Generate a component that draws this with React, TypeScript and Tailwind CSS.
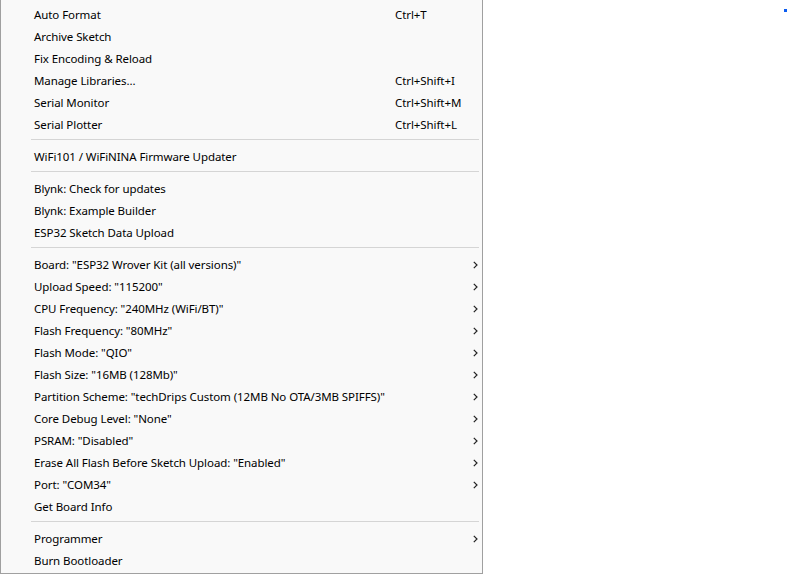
type Item = { label: string; shortcut?: string; sub?: boolean } | "sep";

const items: Item[] = [
  { label: "Auto Format", shortcut: "Ctrl+T" },
  { label: "Archive Sketch" },
  { label: "Fix Encoding & Reload" },
  { label: "Manage Libraries...", shortcut: "Ctrl+Shift+I" },
  { label: "Serial Monitor", shortcut: "Ctrl+Shift+M" },
  { label: "Serial Plotter", shortcut: "Ctrl+Shift+L" },
  "sep",
  { label: "WiFi101 / WiFiNINA Firmware Updater" },
  "sep",
  { label: "Blynk: Check for updates" },
  { label: "Blynk: Example Builder" },
  { label: "ESP32 Sketch Data Upload" },
  "sep",
  { label: 'Board: "ESP32 Wrover Kit (all versions)"', sub: true },
  { label: 'Upload Speed: "115200"', sub: true },
  { label: 'CPU Frequency: "240MHz (WiFi/BT)"', sub: true },
  { label: 'Flash Frequency: "80MHz"', sub: true },
  { label: 'Flash Mode: "QIO"', sub: true },
  { label: 'Flash Size: "16MB (128Mb)"', sub: true },
  { label: 'Partition Scheme: "techDrips Custom (12MB No OTA/3MB SPIFFS)"', sub: true },
  { label: 'Core Debug Level: "None"', sub: true },
  { label: 'PSRAM: "Disabled"', sub: true },
  { label: 'Erase All Flash Before Sketch Upload: "Enabled"', sub: true },
  { label: 'Port: "COM34"', sub: true },
  { label: "Get Board Info" },
  "sep",
  { label: "Programmer", sub: true },
  { label: "Burn Bootloader" },
];

const Chevron = () => (
  <svg width="5" height="8" viewBox="0 0 5 8" className="shrink-0">
    <polyline points="0.8,0.8 4,4 0.8,7.2" fill="none" stroke="#222" strokeWidth="1.2" />
  </svg>
);

export default function App() {
  return (
    <div className="relative flex w-full h-[574px] bg-white font-['Noto_Sans',sans-serif] text-[11.5px] tracking-[-0.08px] text-black">
      {/* MENU */}
      <div className="w-[483px] h-[574px] bg-[#f9f9f9] border-l border-r border-b border-[#a0a0a0] pt-[3px]">
        {items.map((it, i) =>
          it === "sep" ? (
            <div key={i} className="h-[10px] pt-[4px] ml-[30px] mr-[3px]">
              <div className="h-px bg-[#d5d5d5]" />
            </div>
          ) : (
            <div key={i} className="flex items-center h-[22px] pl-[33px] pr-[4px] pt-[2px] leading-none">
              <span className="w-[361px] shrink-0 whitespace-nowrap">{it.label}</span>
              <span className="whitespace-nowrap">{it.shortcut}</span>
              <span className="ml-auto">{it.sub && <Chevron />}</span>
            </div>
          )
        )}
      </div>

      {/* stray dot */}
      <div className="absolute left-[784px] top-[9px] w-[3px] h-[3px] bg-[#0b5cf0]" />
    </div>
  );
}
